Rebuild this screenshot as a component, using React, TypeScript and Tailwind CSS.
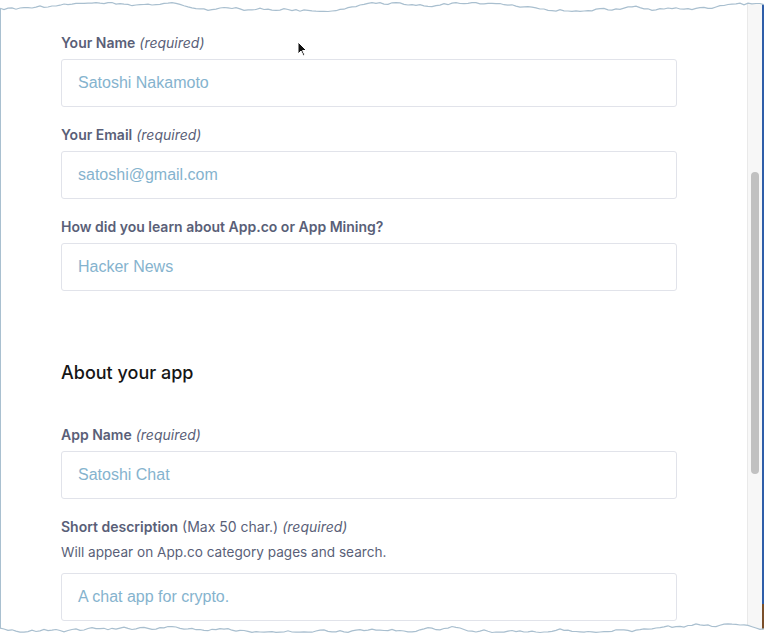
import { useMemo } from 'react'

type FieldProps = {
  label: string
  note?: string
  required?: boolean
  helper?: string
  placeholder: string
}

// deterministic jagged line for the torn paper edges
const tornPoints = (seed: number, base: number, amp: number) => {
  let s = seed
  const rand = () => {
    s = (s * 9301 + 49297) % 233280
    return s / 233280
  }
  const pts: [number, number][] = []
  let y = base
  for (let x = 0; x <= 764; x += 4) {
    y += (rand() - 0.5) * 3.2
    if (y > base + amp) y = base + amp - rand()
    if (y < base - amp) y = base - amp + rand()
    pts.push([x, Number(y.toFixed(1))])
  }
  return pts
}

const Field = ({ label, note, required, helper, placeholder }: FieldProps) => (
  <div className="mb-[18px]">
    <div className="h-5 text-[14px] leading-5 text-[#5a5f78]">
      <span className="font-semibold">{label}</span>
      {note && <span className="font-normal"> {note}</span>}
      {required && <span className="italic font-normal"> (required)</span>}
    </div>
    {helper && (
      <div className="mt-[5px] h-5 text-[13.6px] leading-5 text-[#5a5f78]">{helper}</div>
    )}
    <div
      className={`${helper ? 'mt-[11px]' : 'mt-[6px]'} flex h-12 items-center rounded-[3px] border border-[#e1e3ea] bg-white pl-4`}
    >
      <span className="font-['Liberation_Sans',Arial,sans-serif] text-[16px] text-[#85b3ce]">
        {placeholder}
      </span>
    </div>
  </div>
)

export default function App() {
  const top = useMemo(() => tornPoints(17, 7, 4.5), [])
  const bottom = useMemo(() => tornPoints(91, 627, 5.5), [])

  const topPath =
    'M0,0 ' + top.map(([x, y]) => `L${x},${y}`).join(' ') + ' L764,0 Z'
  const bottomPath =
    'M0,634 ' + bottom.map(([x, y]) => `L${x},${y}`).join(' ') + ' L764,634 Z'
  const topLine = top.map(([x, y]) => `${x},${y}`).join(' ')
  const bottomLine = bottom.map(([x, y]) => `${x},${y}`).join(' ')

  return (
    <div className="relative h-[634px] w-[764px] overflow-hidden bg-white font-['Inter','Noto_Sans',sans-serif]">
      <div className="flex h-full">
        <div className="w-px bg-[#a9c0d0]" />
        <div className="flex-1 pl-[60px] pt-[33px]">
          <div className="w-[616px]">
            <Field label="Your Name" required placeholder="Satoshi Nakamoto" />
            <Field label="Your Email" required placeholder="satoshi@gmail.com" />
            <Field label="How did you learn about App.co or App Mining?" placeholder="Hacker News" />

            <h2 className="mb-[38px] mt-[68px] h-7 text-[18px] font-medium leading-7 text-[#161616]">
              About your app
            </h2>

            <Field label="App Name" required placeholder="Satoshi Chat" />
            <Field
              label="Short description"
              note="(Max 50 char.)"
              required
              helper="Will appear on App.co category pages and search."
              placeholder="A chat app for crypto."
            />
          </div>
        </div>

        {/* scrollbar */}
        <div className="w-[15px] border-l border-[#e9e9e9] bg-[#f7f7f7] px-[3px] pt-[172px]">
          <div className="h-[302px] w-2 rounded-full bg-[#c1c1c1]" />
        </div>
        <div className="flex w-[2px] flex-col">
          <div className="flex-1 bg-[#2e5ea9]" />
          <div className="h-[30px] bg-[#7a4f2a]" />
        </div>
      </div>

      {/* mouse pointer */}
      <svg className="absolute left-[297px] top-[41px]" width="10" height="16" viewBox="0 0 10 16">
        <path d="M1 1 L1 13 L4 10 L6.5 15 L8 14.3 L5.6 9.5 L9.5 9.5 Z" fill="#111" stroke="#fff" strokeWidth="1" />
      </svg>

      {/* torn edges */}
      <svg className="pointer-events-none absolute left-0 top-0" width="764" height="634" viewBox="0 0 764 634">
        <path d={topPath} fill="#fff" />
        <polyline points={topLine} fill="none" stroke="#a9bfcf" strokeWidth="1.2" />
        <path d={bottomPath} fill="#fff" />
        <polyline points={bottomLine} fill="none" stroke="#a9bfcf" strokeWidth="1.2" />
      </svg>
    </div>
  )
}
